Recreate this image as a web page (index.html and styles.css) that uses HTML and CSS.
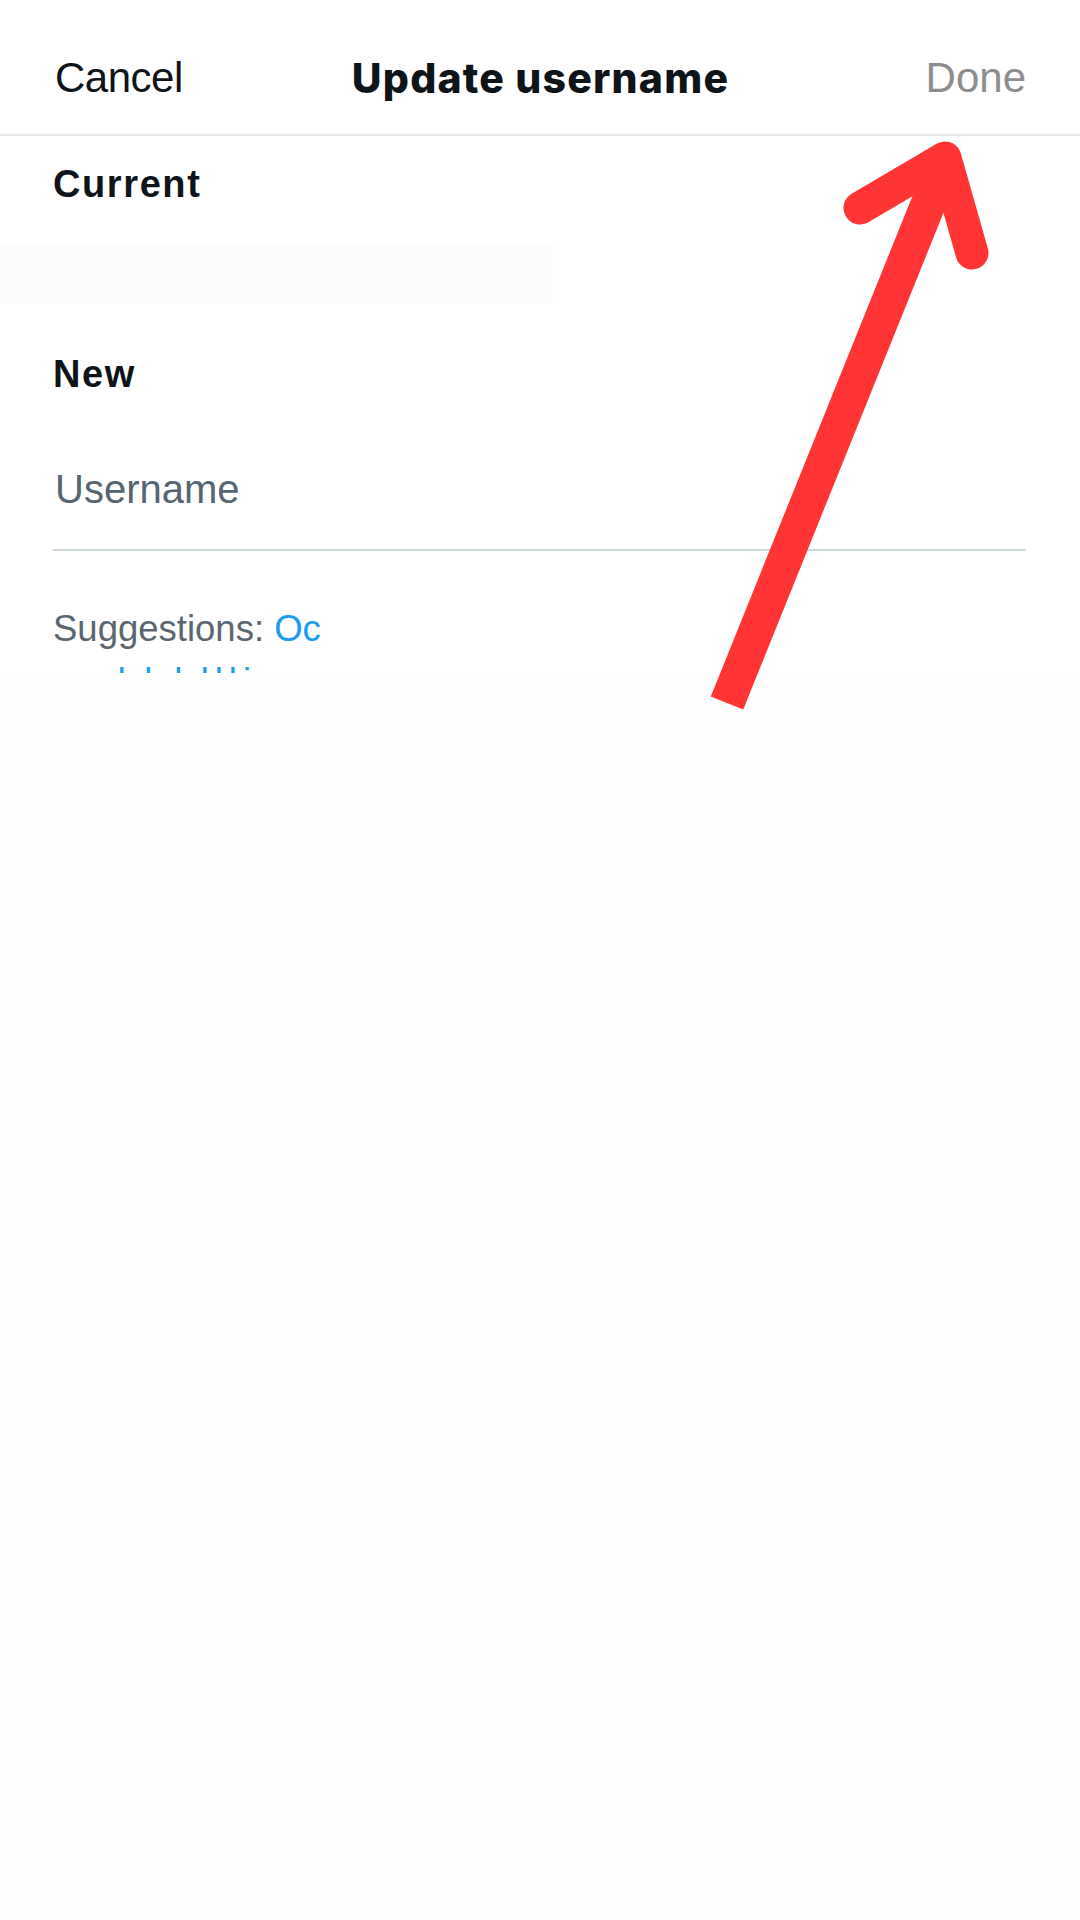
FILE: index.html
```html
<!DOCTYPE html>
<html lang="en">
<head>
    <meta charset="UTF-8">
    <meta name="viewport" content="width=device-width, initial-scale=1.0">
    <title>Update username</title>
    <link rel="stylesheet" href="styles.css">
</head>
<body>
    <div class="screen">
        <header class="topbar">
            <span class="cancel">Cancel</span>
            <h1 class="title">Update username</h1>
            <span class="done">Done</span>
        </header>

        <div class="form">
            <div class="label current-label">Current</div>
            <div class="current-value"></div>

            <div class="label new-label">New</div>
            <div class="field">
                <span class="placeholder">Username</span>
            </div>

            <div class="suggest">
                <div class="suggest-line">Suggestions: <span class="link">Oc</span></div>
                <div class="suggest-line second link">oodd ldllioon</div>
            </div>
        </div>

        <!-- blurred-out area covering the rest of the suggestions -->
        <div class="redact"></div>

        <!-- annotation arrow pointing at Done -->
        <svg class="arrow" width="1080" height="760" viewBox="0 0 1080 760">
            <line x1="727" y1="703" x2="937" y2="182" stroke="#ff3434" stroke-width="35" />
            <polyline points="860,208 945,158 972,253" fill="none" stroke="#ff3434" stroke-width="33" stroke-linecap="round" stroke-linejoin="round" />
        </svg>
    </div>
</body>
</html>
```

FILE: styles.css
```css
body {
    margin: 0;
    background: #fefefe;
    font-family: "Liberation Sans", Arial, sans-serif;
    color: #0f1419;
}
.screen {
    position: relative;
    width: 1080px;
    height: 1920px;
    overflow: hidden;
    background: #ffffff;
}
.topbar {
    display: grid;
    grid-template-columns: 1fr auto 1fr;
    align-items: center;
    height: 112px;
    padding: 22px 54px 0 55px;
    border-bottom: 2px solid #e7e9ec;
}
.cancel {
    font-size: 42px;
    line-height: 42px;
    letter-spacing: -0.5px;
}
.title {
    margin: 0;
    font-family: Inter, "Liberation Sans", sans-serif;
    font-weight: 800;
    font-size: 41px;
    line-height: 40px;
    letter-spacing: 1.2px;
}
.done {
    justify-self: end;
    font-size: 42px;
    line-height: 42px;
    color: #8e8e8e;
}
.form {
    padding-top: 25px;
}
.label {
    padding-left: 53px;
    font-weight: bold;
    font-size: 38px;
    line-height: 46px;
    letter-spacing: 1.6px;
}
.current-value {
    width: 553px;
    height: 59px;
    margin-top: 38px;
    background: #fcfcfc;
}
.new-label {
    margin-top: 47px;
}
.field {
    margin: 68px 54px 0 53px;
    padding: 0 2px 36px;
    border-bottom: 2px solid #cfd9de;
}
.placeholder {
    display: block;
    font-size: 40px;
    line-height: 48px;
    color: #56656f;
}
.suggest {
    margin: 56px 0 0 53px;
}
.suggest-line {
    white-space: nowrap;
    font-size: 36.5px;
    line-height: 44px;
    color: #5b6670;
}
.suggest-line.second {
    margin-top: 9px;
    letter-spacing: 6px;
}
.link {
    color: #1d9bf0;
}
.redact {
    position: absolute;
    top: 673px;
    left: 0;
    right: 0;
    bottom: 0;
    background: #fefefe;
}
.arrow {
    position: absolute;
    top: 0;
    left: 0;
}
```
